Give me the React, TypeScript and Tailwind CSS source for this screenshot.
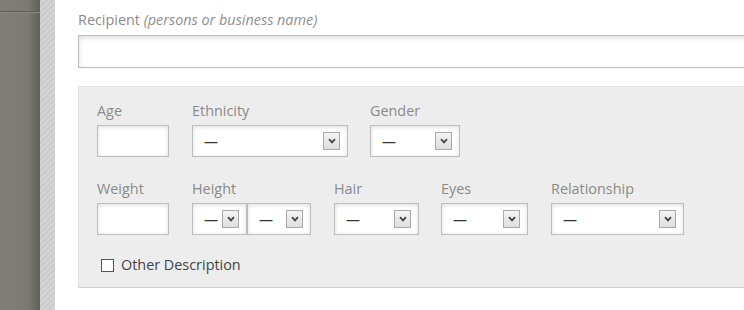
import React from 'react';

const font = { fontFamily: '"Open Sans", "Liberation Sans", sans-serif' };

// 小号下拉框
const Select: React.FC<{ width: string }> = ({ width }) => (
  <div
    className={`relative h-[32px] ${width} border border-[#bdbdbd] bg-white shadow-[inset_0_1px_4px_rgba(0,0,0,0.14)] flex items-center pl-[11px] text-[14px] text-[#333]`}
  >
    <span className="leading-none mt-[2px]">—</span>
    <div className="absolute right-[7px] top-1/2 -translate-y-1/2 w-[17px] h-[18px] border border-[#a9a9a9] bg-gradient-to-b from-[#f4f4f4] to-[#dedede] flex items-center justify-center">
      <svg width="8" height="6" viewBox="0 0 8 6">
        <path d="M1 1.2 L4 4.4 L7 1.2" fill="none" stroke="#444" strokeWidth="1.8" />
      </svg>
    </div>
  </div>
);

const TextBox: React.FC<{ width: string }> = ({ width }) => (
  <div className={`h-[32px] ${width} border border-[#bdbdbd] bg-white shadow-[inset_0_1px_4px_rgba(0,0,0,0.14)]`} />
);

const Field: React.FC<{ label: string; children: React.ReactNode }> = ({ label, children }) => (
  <div className="flex flex-col">
    <div className="text-[14.4px] leading-[20px] text-[#8a8a8a] mb-[4px]">{label}</div>
    {children}
  </div>
);

export default function App() {
  return (
    <div className="flex h-[310px] w-[744px] overflow-hidden bg-white" style={font}>
      {/* 左侧深色栏 */}
      <div className="w-[40px] shrink-0 h-full flex flex-col bg-[linear-gradient(to_right,#7e7d76_0%,#7b7a73_70%,#5f5e59_100%)]">
        <div className="h-[12px] border-b border-[#5e5d57]" />
        <div className="border-t border-[#8a8982]" />
      </div>
      <div className="w-[15px] shrink-0 h-full bg-[repeating-linear-gradient(135deg,#cbcbcb_0px,#cbcbcb_2px,#d4d4d4_2px,#d4d4d4_4px)]" />

      {/* 表单区域 */}
      <div className="shrink-0 pl-[23px] pt-[10px]">
        <div className="text-[14.4px] leading-[20px] text-[#8a8a8a]">
          Recipient <em className="text-[#8e8e8e]">(persons or business name)</em>
        </div>
        <div className="mt-[5px] h-[33px] w-[700px] border border-[#bdbdbd] bg-white shadow-[inset_0_2px_5px_rgba(0,0,0,0.14)]" />

        <div className="mt-[18px] w-[700px] h-[202px] bg-[#ededed] border border-[#e1e1e1] border-b-[#cfcfcf] pl-[18px] pt-[14px]">
          <div className="flex gap-[23px]">
            <Field label="Age">
              <TextBox width="w-[72px]" />
            </Field>
            <Field label="Ethnicity">
              <Select width="w-[156px]" />
            </Field>
            <div className="-ml-[1px]">
              <Field label="Gender">
                <Select width="w-[90px]" />
              </Field>
            </div>
          </div>

          <div className="flex gap-[23px] mt-[22px]">
            <Field label="Weight">
              <TextBox width="w-[72px]" />
            </Field>
            <Field label="Height">
              <div className="flex">
                <Select width="w-[55px]" />
                <Select width="w-[64px]" />
              </div>
            </Field>
            <Field label="Hair">
              <Select width="w-[85px]" />
            </Field>
            <div className="-ml-[1px]">
              <Field label="Eyes">
                <Select width="w-[87px]" />
              </Field>
            </div>
            <Field label="Relationship">
              <Select width="w-[133px]" />
            </Field>
          </div>

          <label className="flex items-center mt-[20px] ml-[4px] text-[14.4px] leading-[20px] text-[#444]">
            <span className="w-[13px] h-[13px] border border-[#555] bg-white" />
            <span className="ml-[7px]">Other Description</span>
          </label>
        </div>
      </div>
    </div>
  );
}
